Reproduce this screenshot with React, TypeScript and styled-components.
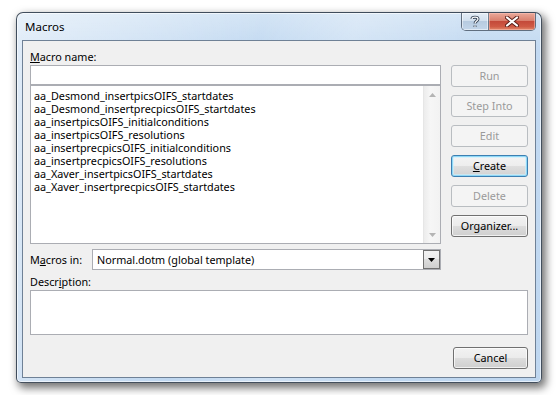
import React from "react";
import styled, { createGlobalStyle, css } from "styled-components";

const Global = createGlobalStyle`
  html, body { margin: 0; padding: 0; background: #ffffff; }
  body { font-family: "Noto Sans", "Open Sans", sans-serif; font-size: 10.8px; color: #000; }
  * { box-sizing: border-box; }
`;

const Page = styled.div`
  padding: 12px 0 0 16px;
  width: 558px;
  height: 395px;
`;

const Window = styled.div`
  width: 526px;
  height: 371px;
  display: flex;
  flex-direction: column;
  border: 1px solid rgba(40, 52, 66, 0.85);
  border-radius: 7px 7px 5px 5px;
  background:
    linear-gradient(105deg, rgba(255,255,255,0.5) 0%, rgba(255,255,255,0.2) 25%, rgba(255,255,255,0) 40%, rgba(255,255,255,0.25) 55%, rgba(255,255,255,0) 75%),
    linear-gradient(180deg, #d3e4f5 0%, #c2d9f1 10%, #bfd7f0 100%);
  box-shadow: 3px 4px 8px 1px rgba(0, 0, 0, 0.55), inset 0 0 0 1px rgba(255,255,255,0.6);
`;

const TitleBar = styled.div`
  height: 27px;
  display: flex;
  align-items: flex-start;
  padding-left: 8px;
  padding-right: 5px;
`;

const Title = styled.span`
  margin-top: 6px;
  font-size: 11.5px;
  line-height: 16px;
  color: #000;
`;

const CaptionGroup = styled.div`
  margin-left: auto;
  display: flex;
  height: 18px;
  border: 1px solid rgba(50, 62, 78, 0.7);
  border-top: none;
  border-radius: 0 0 5px 5px;
  overflow: hidden;
`;

const CaptionButton = styled.div<{ $close?: boolean }>`
  display: flex;
  align-items: center;
  justify-content: center;
  ${(p) =>
    p.$close
      ? css`
          width: 46px;
          background: linear-gradient(180deg, #eaa99a 0%, #d9806e 45%, #c44a3a 50%, #cf5a45 80%, #e08a6c 100%);
          box-shadow: inset 0 0 0 1px rgba(255, 200, 190, 0.5);
        `
      : css`
          width: 27px;
          border-right: 1px solid rgba(50, 62, 78, 0.6);
          background: linear-gradient(180deg, #e4edf6 0%, #d2e0ee 45%, #b7cbe0 50%, #c3d6ea 100%);
          box-shadow: inset 0 0 0 1px rgba(255, 255, 255, 0.5);
        `}
`;

const Client = styled.div`
  flex: 1;
  margin: 0 5px 4px 5px;
  border: 1px solid #6f8196;
  background: #f0f0f0;
  padding: 0 7px;
  display: flex;
  flex-direction: column;
`;

const Top = styled.div`
  display: flex;
  gap: 10px;
`;

const LeftCol = styled.div`
  width: 411px;
  display: flex;
  flex-direction: column;
`;

const RightCol = styled.div`
  width: 77px;
  padding-top: 24px;
  display: flex;
  flex-direction: column;
  gap: 8px;
`;

const Label = styled.div<{ $h: number }>`
  height: ${(p) => p.$h}px;
  display: flex;
  align-items: flex-end;
  line-height: 16px;
  white-space: nowrap;
`;

const TextInput = styled.div`
  height: 20px;
  background: #fff;
  border: 1px solid #abadb3;
`;

const ListBox = styled.div`
  height: 159px;
  background: #fff;
  border: 1px solid #abadb3;
  display: flex;
`;

const Items = styled.div`
  flex: 1;
  padding: 3px 3px;
`;

const Item = styled.div`
  line-height: 13px;
  height: 13px;
  white-space: nowrap;
`;

const ScrollBar = styled.div`
  width: 17px;
  display: flex;
  flex-direction: column;
  background: linear-gradient(90deg, #ececec 0%, #f6f6f6 40%, #f2f2f2 100%);
  border-left: 1px solid #e6e6e6;
`;

const ArrowBox = styled.div<{ $grow?: boolean }>`
  height: 17px;
  display: flex;
  align-items: center;
  justify-content: center;
  ${(p) => p.$grow && css`flex: 1;`}
`;

const Row = styled.div`
  margin-top: 5px;
  display: flex;
  align-items: center;
`;

const RowLabel = styled.div`
  width: 62px;
  line-height: 16px;
  white-space: nowrap;
`;

const Combo = styled.div`
  flex: 1;
  height: 21px;
  background: #fff;
  border: 1px solid #abadb3;
  display: flex;
  align-items: center;
`;

const ComboText = styled.div`
  flex: 1;
  padding-left: 4px;
  line-height: 16px;
  white-space: nowrap;
`;

const ComboButton = styled.div`
  width: 17px;
  height: 19px;
  border: 1px solid #707070;
  background: linear-gradient(180deg, #f2f2f2 0%, #ebebeb 50%, #dddddd 50%, #cfcfcf 100%);
  display: flex;
  align-items: center;
  justify-content: center;
`;

const DescBox = styled.div`
  height: 45px;
  background: #fff;
  border: 1px solid #abadb3;
`;

const Button = styled.div<{ $variant?: "normal" | "disabled" | "default"; $w?: number }>`
  width: ${(p) => p.$w ?? 77}px;
  height: 22px;
  border-radius: 3px;
  display: flex;
  align-items: center;
  justify-content: center;
  line-height: 16px;
  white-space: nowrap;
  ${(p) =>
    p.$variant === "disabled"
      ? css`
          border: 1px solid #b9bdc1;
          background: #f4f4f4;
          color: #9a9a9a;
        `
      : p.$variant === "default"
      ? css`
          border: 1px solid #3c7fb1;
          background: linear-gradient(180deg, #f4f4f4 0%, #ededed 50%, #dfdfdf 50%, #d2d2d2 100%);
          box-shadow: inset 0 0 0 1px #8fd8f7, inset 0 0 0 2px rgba(200, 240, 255, 0.6);
          color: #000;
        `
      : css`
          border: 1px solid #707070;
          background: linear-gradient(180deg, #f2f2f2 0%, #ebebeb 50%, #dddddd 50%, #cfcfcf 100%);
          box-shadow: inset 0 0 0 1px rgba(255, 255, 255, 0.7);
          color: #000;
        `}
`;

const Footer = styled.div`
  margin-top: 12px;
  display: flex;
  justify-content: flex-end;
`;

const macros = [
  "aa_Desmond_insertpicsOIFS_startdates",
  "aa_Desmond_insertprecpicsOIFS_startdates",
  "aa_insertpicsOIFS_initialconditions",
  "aa_insertpicsOIFS_resolutions",
  "aa_insertprecpicsOIFS_initialconditions",
  "aa_insertprecpicsOIFS_resolutions",
  "aa_Xaver_insertpicsOIFS_startdates",
  "aa_Xaver_insertprecpicsOIFS_startdates",
];

const Tri = ({ up, color }: { up?: boolean; color: string }) => (
  <svg width="7" height="4" viewBox="0 0 7 4">
    <path d={up ? "M0 4 L3.5 0 L7 4 Z" : "M0 0 L7 0 L3.5 4 Z"} fill={color} />
  </svg>
);

export default function App() {
  return (
    <>
      <Global />
      <Page>
        <Window>
          <TitleBar>
            <Title>Macros</Title>
            <CaptionGroup>
              <CaptionButton>
                <svg width="10" height="14" viewBox="0 0 10 14">
                  <path
                    d="M2 4 C2 1.5 8 1.5 8 4 C8 6 5 6 5 8.5 M5 10.5 L5 12"
                    fill="none"
                    stroke="#3c4a5c"
                    strokeWidth="3"
                  />
                  <path
                    d="M2 4 C2 1.5 8 1.5 8 4 C8 6 5 6 5 8.5 M5 10.5 L5 12"
                    fill="none"
                    stroke="#ffffff"
                    strokeWidth="1.2"
                  />
                </svg>
              </CaptionButton>
              <CaptionButton $close>
                <svg width="14" height="11" viewBox="0 0 14 11">
                  <path d="M2 1.5 L12 9.5 M12 1.5 L2 9.5" stroke="#5a1f18" strokeWidth="4" strokeLinecap="round" />
                  <path d="M2 1.5 L12 9.5 M12 1.5 L2 9.5" stroke="#ffffff" strokeWidth="2.2" strokeLinecap="round" />
                </svg>
              </CaptionButton>
            </CaptionGroup>
          </TitleBar>
          <Client>
            <Top>
              <LeftCol>
                <Label $h={24}>
                  <span>
                    <u>M</u>acro name:
                  </span>
                </Label>
                <TextInput />
                <ListBox>
                  <Items>
                    {macros.map((m) => (
                      <Item key={m}>{m}</Item>
                    ))}
                  </Items>
                  <ScrollBar>
                    <ArrowBox>
                      <Tri up color="#b4b4b4" />
                    </ArrowBox>
                    <ArrowBox $grow />
                    <ArrowBox>
                      <Tri color="#b4b4b4" />
                    </ArrowBox>
                  </ScrollBar>
                </ListBox>
                <Row>
                  <RowLabel>
                    M<u>a</u>cros in:
                  </RowLabel>
                  <Combo>
                    <ComboText>Normal.dotm (global template)</ComboText>
                    <ComboButton>
                      <Tri color="#000" />
                    </ComboButton>
                  </Combo>
                </Row>
              </LeftCol>
              <RightCol>
                <Button $variant="disabled">Run</Button>
                <Button $variant="disabled">Step Into</Button>
                <Button $variant="disabled">Edit</Button>
                <Button $variant="default">
                  <span>
                    <u>C</u>reate
                  </span>
                </Button>
                <Button $variant="disabled">Delete</Button>
                <Button $variant="normal">Organizer...</Button>
              </RightCol>
            </Top>
            <Label $h={20}>
              <span>
                Descr<u>i</u>ption:
              </span>
            </Label>
            <DescBox />
            <Footer>
              <Button $variant="normal" $w={75}>
                Cancel
              </Button>
            </Footer>
          </Client>
        </Window>
      </Page>
    </>
  );
}
